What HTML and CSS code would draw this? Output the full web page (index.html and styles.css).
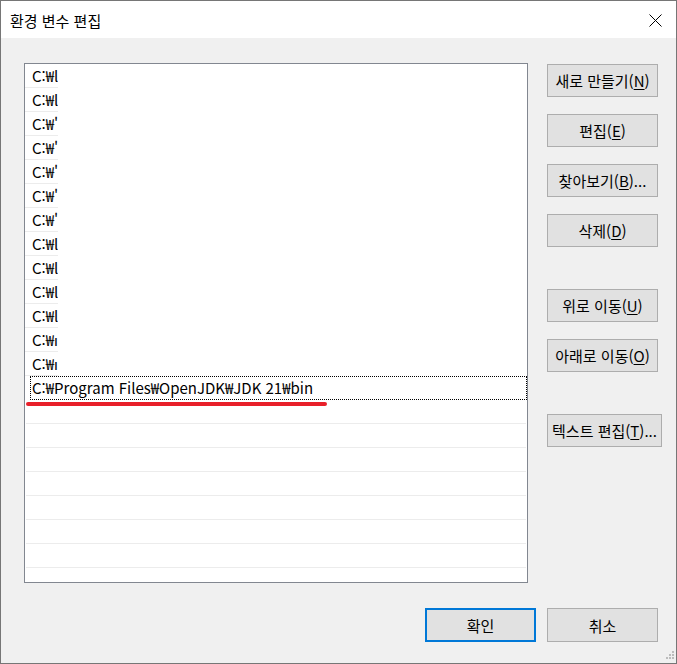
FILE: index.html
```html
<!DOCTYPE html>
<html lang="ko">
<head>
<meta charset="utf-8">
<title>환경 변수 편집</title>
<link rel="stylesheet" href="styles.css">
</head>
<body>
<div class="window">
  <div class="titlebar">
    <span class="title">환경 변수 편집</span>
    <span class="close">
      <svg width="13" height="13" viewBox="0 0 13 13"><path d="M0.5 0.5 L12.5 12.5 M12.5 0.5 L0.5 12.5" stroke="#000" stroke-width="1" fill="none"/></svg>
    </span>
  </div>
  <div class="content">
    <div class="main">
      <div class="list">
        <div class="row"><div class="cell">C:₩l</div></div>
        <div class="row"><div class="cell">C:₩l</div></div>
        <div class="row"><div class="cell">C:₩'</div></div>
        <div class="row"><div class="cell">C:₩'</div></div>
        <div class="row"><div class="cell">C:₩'</div></div>
        <div class="row"><div class="cell">C:₩'</div></div>
        <div class="row"><div class="cell">C:₩'</div></div>
        <div class="row"><div class="cell">C:₩l</div></div>
        <div class="row"><div class="cell">C:₩l</div></div>
        <div class="row"><div class="cell">C:₩l</div></div>
        <div class="row"><div class="cell">C:₩l</div></div>
        <div class="row"><div class="cell">C:₩ı</div></div>
        <div class="row"><div class="cell">C:₩ı</div></div>
        <div class="row selected"><div class="focus">C:₩Program Files₩OpenJDK₩JDK 21₩bin</div></div>
        <div class="row empty"></div>
        <div class="row empty"></div>
        <div class="row empty"></div>
        <div class="row empty"></div>
        <div class="row empty"></div>
        <div class="row empty"></div>
        <div class="row empty"></div>
        <div class="row empty"></div>
        <div class="mark"></div>
      </div>
      <div class="side">
        <button class="btn">새로 만들기(<u>N</u>)</button>
        <button class="btn">편집(<u>E</u>)</button>
        <button class="btn">찾아보기(<u>B</u>)...</button>
        <button class="btn">삭제(<u>D</u>)</button>
        <button class="btn gap">위로 이동(<u>U</u>)</button>
        <button class="btn">아래로 이동(<u>O</u>)</button>
        <button class="btn gap wide">텍스트 편집(<u>T</u>)...</button>
      </div>
    </div>
    <div class="footer">
      <button class="btn primary">확인</button>
      <button class="btn">취소</button>
    </div>
  </div>
  <svg class="grip" width="12" height="12" viewBox="0 0 12 12">
    <rect x="9" y="1" width="2" height="2" fill="#bcbcbc"/>
    <rect x="6" y="4" width="2" height="2" fill="#bcbcbc"/>
    <rect x="9" y="4" width="2" height="2" fill="#bcbcbc"/>
    <rect x="3" y="7" width="2" height="2" fill="#bcbcbc"/>
    <rect x="6" y="7" width="2" height="2" fill="#bcbcbc"/>
    <rect x="9" y="7" width="2" height="2" fill="#bcbcbc"/>
  </svg>
</div>
</body>
</html>
```
FILE: styles.css
```css
* { box-sizing: border-box; }
html, body { margin: 0; padding: 0; background: #f0f0f0; }
body {
  font-family: "Noto Sans CJK KR", "Noto Sans", sans-serif;
  font-size: 15px;
  color: #000;
}
.window {
  position: relative;
  width: 677px;
  height: 664px;
  border: 1px solid #767676;
  background: #f0f0f0;
  display: flex;
  flex-direction: column;
}
.titlebar {
  height: 37px;
  background: #fff;
  display: flex;
  align-items: center;
  justify-content: space-between;
  padding: 0 14px 0 9px;
}
.title {
  font-size: 15px;
  line-height: 1;
  padding-top: 1px;
}
.close {
  display: flex;
  padding-top: 1px;
}
.content {
  padding: 25px 0 0 23px;
  display: flex;
  flex-direction: column;
}
.main {
  display: flex;
  gap: 19px;
}
.list {
  position: relative;
  width: 504px;
  height: 520px;
  border: 1px solid #828790;
  background: #fff;
  overflow: hidden;
}
.row {
  height: 24px;
  display: flex;
}
.cell {
  width: 33px;
  height: 24px;
  padding-left: 7px;
  border-bottom: 1px solid #ececec;
  white-space: nowrap;
  overflow: hidden;
  line-height: 23px;
}
.row.selected { padding-left: 5px; }
.focus {
  flex: 1;
  height: 24px;
  border: 1px dotted #000;
  padding-left: 1px;
  line-height: 21px;
  white-space: nowrap;
}
.row.empty {
  margin: 0 1px;
  border-bottom: 1px solid #ececec;
}
.mark {
  position: absolute;
  left: 1px;
  top: 338px;
  width: 301px;
  height: 4px;
  border-radius: 2px;
  background: #e8202a;
}
.side {
  display: flex;
  flex-direction: column;
  align-items: flex-start;
  gap: 17px;
  padding-top: 1px;
}
.btn {
  width: 111px;
  height: 33px;
  background: #e1e1e1;
  border: 1px solid #adadad;
  font-family: inherit;
  font-size: 15px;
  color: #000;
  padding: 0;
  margin: 0;
  white-space: nowrap;
  line-height: 1;
}
.btn u { text-underline-offset: 2px; }
.btn.gap { margin-top: 25px; }
.btn.wide { width: 115px; }
.footer {
  display: flex;
  justify-content: flex-end;
  gap: 11px;
  margin-top: 25px;
  padding-right: 18px;
}
.footer .btn { height: 34px; }
.btn.primary { border: 2px solid #0078d7; }
.grip {
  position: absolute;
  right: 1px;
  bottom: 1px;
}
```
